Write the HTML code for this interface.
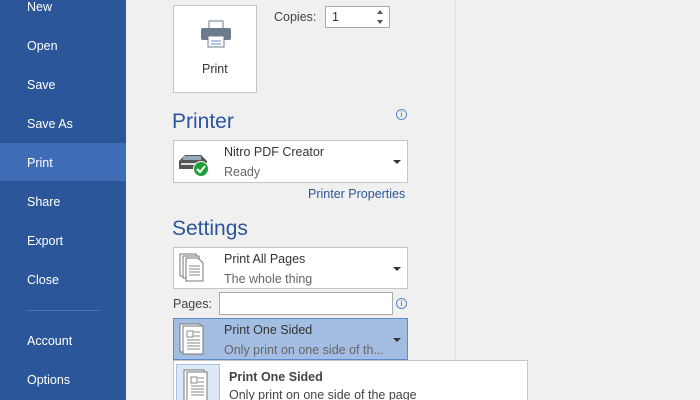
<!DOCTYPE html>
<html style="overflow:hidden;height:400px"><head><style>
*{margin:0;padding:0;box-sizing:border-box}
body{width:700px;height:400px;overflow:hidden;background:#f0f0f0;font-family:"Liberation Sans",sans-serif;position:relative;font-size:12px;color:#444}
.side{position:absolute;left:0;top:0;width:126px;height:400px;background:#2b579a}
.side .m{position:absolute;left:27px;color:#fff;font-size:12.5px}
.hl{position:absolute;left:0;top:143px;width:126px;height:38px;background:#3e6db5}
.a{position:absolute}
.box{position:absolute;background:#fff;border:1px solid #c6c6c6}
h2{position:absolute;font-weight:normal;color:#2b579a;font-size:21px;left:172px}
.tri{position:absolute;width:0;height:0;border-left:4px solid transparent;border-right:4px solid transparent;border-top:4px solid #333}
.info{position:absolute;width:11px;height:11px;border:1px solid #5b8ad0;border-radius:50%;color:#5b8ad0;font-size:8px;text-align:center;line-height:9px;font-weight:bold}
.t1{position:absolute;left:50px;top:4px;font-size:12.5px;color:#333}
.t2{position:absolute;left:50px;top:24px;font-size:12.5px;color:#666}
</style></head><body>
<div class="side"><div class="hl"></div>
<div class="m" style="top:0">New</div><div class="m" style="top:39px">Open</div><div class="m" style="top:78px">Save</div><div class="m" style="top:117px">Save As</div><div class="m" style="top:156px">Print</div><div class="m" style="top:195px">Share</div><div class="m" style="top:234px">Export</div><div class="m" style="top:273px">Close</div>
<span style="position:absolute;left:27px;top:310px;width:73px;height:1px;background:#4a72b0"></span>
<div class="m" style="top:334px">Account</div><div class="m" style="top:373px">Options</div></div>
<div class="a" style="left:455px;top:0;width:1px;height:400px;background:#e2e2e2"></div>

<div class="box" style="left:173px;top:5px;width:84px;height:88px">
<svg class="a" style="left:26px;top:14px" width="32" height="28" viewBox="0 0 32 28"><rect x="9" y="1" width="14" height="8" fill="#fff" stroke="#6b7b8c"/><rect x="1" y="8" width="30" height="12" rx="2" fill="#6b7b8c"/><rect x="8" y="16" width="16" height="11" fill="#fff" stroke="#6b7b8c"/><line x1="11" y1="21" x2="21" y2="21" stroke="#5b8ad0"/><line x1="11" y1="24" x2="21" y2="24" stroke="#5b8ad0"/></svg>
<div class="a" style="left:28px;top:56px;font-size:12.5px;color:#333">Print</div></div>
<div class="a" style="left:274px;top:10px;font-size:12.5px;color:#444">Copies:</div>
<div class="box" style="left:325px;top:6px;width:65px;height:22px;border-color:#ababab"><span class="a" style="left:6px;top:3px;font-size:12.5px;color:#333">1</span>
<span class="a" style="left:51px;top:3px;border:3px solid transparent;border-bottom:4px solid #555;border-top:0"></span><span class="a" style="left:51px;top:13px;border:3px solid transparent;border-top:4px solid #555;border-bottom:0"></span></div>

<h2 style="top:110px">Printer</h2>
<div class="info" style="left:396px;top:109px">i</div>
<div class="box" style="left:173px;top:140px;width:235px;height:43px">
<svg class="a" style="left:3px;top:8px" width="34" height="28"><path d="M2 12 L8 6 H24 L30 12 V20 H2Z" fill="#555"/><rect x="6" y="7" width="18" height="4" fill="#9ab"/><rect x="4" y="14" width="22" height="2" fill="#ddd"/><circle cx="24" cy="20" r="7.5" fill="#1f9e3a" stroke="#fff"/><path d="M20 20 l3 3 l5 -6" stroke="#fff" stroke-width="2" fill="none"/></svg>
<div class="t1">Nitro PDF Creator</div><div class="t2">Ready</div><div class="tri" style="left:219px;top:19px"></div></div>
<div class="a" style="left:308px;top:187px;color:#2b579a;font-size:12.5px">Printer Properties</div>

<h2 style="top:217px">Settings</h2>
<div class="box" style="left:173px;top:247px;width:235px;height:42px">
<svg class="a" style="left:5px;top:5px" width="30" height="30"><g fill="#fff" stroke="#777"><rect x="1" y="1" width="16" height="22"/><rect x="4" y="3" width="16" height="22"/><path d="M7 5 H19 L24 10 V28 H7Z"/></g><g stroke="#888"><line x1="10" y1="13" x2="21" y2="13"/><line x1="10" y1="16" x2="21" y2="16"/><line x1="10" y1="19" x2="21" y2="19"/><line x1="10" y1="22" x2="21" y2="22"/></g></svg>
<div class="t1">Print All Pages</div><div class="t2">The whole thing</div><div class="tri" style="left:219px;top:19px"></div></div>
<div class="a" style="left:173px;top:297px;font-size:12.5px;color:#444">Pages:</div>
<div class="box" style="left:219px;top:292px;width:174px;height:23px;border-color:#ababab"></div>
<div class="info" style="left:396px;top:298px">i</div>
<div class="a" style="left:173px;top:318px;width:235px;height:42px;background:#a3bde3;border:1px solid #5b8ad0">
<svg class="a" style="left:5px;top:4px" width="30" height="32"><rect x="1" y="1" width="20" height="28" fill="#fff" stroke="#777"/><rect x="4" y="3" width="20" height="28" fill="#fff" stroke="#777"/><rect x="8" y="8" width="6" height="6" fill="none" stroke="#888"/><g stroke="#888"><line x1="15" y1="9" x2="21" y2="9"/><line x1="15" y1="13" x2="21" y2="13"/><line x1="8" y1="17" x2="21" y2="17"/><line x1="8" y1="20" x2="21" y2="20"/><line x1="8" y1="23" x2="21" y2="23"/><line x1="8" y1="26" x2="21" y2="26"/></g></svg>
<div class="t1">Print One Sided</div><div class="t2">Only print on one side of th...</div><div class="tri" style="left:219px;top:19px"></div></div>
<div class="a" style="left:173px;top:360px;width:355px;height:40px;background:#fff;border:1px solid #c6c6c6;border-bottom:0;overflow:hidden">
<div class="a" style="left:2px;top:3px;width:44px;height:50px;background:#dce8f6;border:1px solid #a9c4ea">
<svg class="a" style="left:6px;top:4px" width="30" height="40"><rect x="1" y="1" width="20" height="36" fill="#fff" stroke="#777"/><rect x="4" y="3" width="20" height="36" fill="#fff" stroke="#777"/><rect x="8" y="8" width="6" height="6" fill="none" stroke="#888"/><g stroke="#888"><line x1="15" y1="9" x2="21" y2="9"/><line x1="15" y1="13" x2="21" y2="13"/><line x1="8" y1="17" x2="21" y2="17"/><line x1="8" y1="20" x2="21" y2="20"/><line x1="8" y1="23" x2="21" y2="23"/><line x1="8" y1="26" x2="21" y2="26"/></g></svg></div>
<div class="a" style="left:55px;top:9px;font-weight:bold;font-size:12.5px;color:#444">Print One Sided</div>
<div class="a" style="left:55px;top:27px;font-size:12.5px;color:#444">Only print on one side of the page</div></div>
</body></html>
